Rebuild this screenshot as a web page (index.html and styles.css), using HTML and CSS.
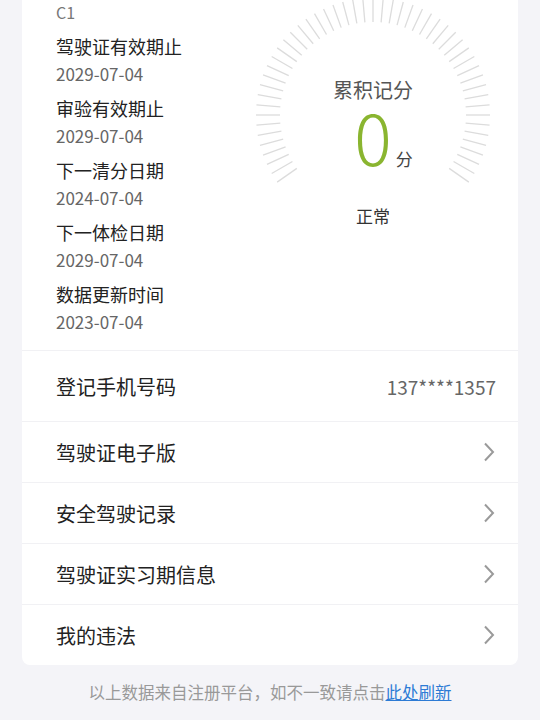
FILE: index.html
```html
<!DOCTYPE html>
<html lang="zh-CN">
<head>
  <meta charset="UTF-8">
  <title>驾驶证信息</title>
  <link rel="stylesheet" href="styles.css">
</head>
<body>
  <div class="card">
    <div class="top">
      <div class="info">
        <div class="kind">C1</div>
        <div class="pair"><div class="label">驾驶证有效期止</div><div class="date">2029-07-04</div></div>
        <div class="pair"><div class="label">审验有效期止</div><div class="date">2029-07-04</div></div>
        <div class="pair"><div class="label">下一清分日期</div><div class="date">2024-07-04</div></div>
        <div class="pair"><div class="label">下一体检日期</div><div class="date">2029-07-04</div></div>
        <div class="pair"><div class="label">数据更新时间</div><div class="date">2023-07-04</div></div>
      </div>
      <div class="gauge">
        <svg width="240" height="240" viewBox="0 0 240 240">
          <defs><line id="t" x1="120" y1="3" x2="120" y2="27"/></defs>
          <g stroke="#dcdcdc" stroke-width="1.3">
            <use href="#t" transform="rotate(-125 120 120)"/>
            <use href="#t" transform="rotate(-120 120 120)"/>
            <use href="#t" transform="rotate(-115 120 120)"/>
            <use href="#t" transform="rotate(-110 120 120)"/>
            <use href="#t" transform="rotate(-105 120 120)"/>
            <use href="#t" transform="rotate(-100 120 120)"/>
            <use href="#t" transform="rotate(-95 120 120)"/>
            <use href="#t" transform="rotate(-90 120 120)"/>
            <use href="#t" transform="rotate(-85 120 120)"/>
            <use href="#t" transform="rotate(-80 120 120)"/>
            <use href="#t" transform="rotate(-75 120 120)"/>
            <use href="#t" transform="rotate(-70 120 120)"/>
            <use href="#t" transform="rotate(-65 120 120)"/>
            <use href="#t" transform="rotate(-60 120 120)"/>
            <use href="#t" transform="rotate(-55 120 120)"/>
            <use href="#t" transform="rotate(-50 120 120)"/>
            <use href="#t" transform="rotate(-45 120 120)"/>
            <use href="#t" transform="rotate(-40 120 120)"/>
            <use href="#t" transform="rotate(-35 120 120)"/>
            <use href="#t" transform="rotate(-30 120 120)"/>
            <use href="#t" transform="rotate(-25 120 120)"/>
            <use href="#t" transform="rotate(-20 120 120)"/>
            <use href="#t" transform="rotate(-15 120 120)"/>
            <use href="#t" transform="rotate(-10 120 120)"/>
            <use href="#t" transform="rotate(-5 120 120)"/>
            <use href="#t"/>
            <use href="#t" transform="rotate(5 120 120)"/>
            <use href="#t" transform="rotate(10 120 120)"/>
            <use href="#t" transform="rotate(15 120 120)"/>
            <use href="#t" transform="rotate(20 120 120)"/>
            <use href="#t" transform="rotate(25 120 120)"/>
            <use href="#t" transform="rotate(30 120 120)"/>
            <use href="#t" transform="rotate(35 120 120)"/>
            <use href="#t" transform="rotate(40 120 120)"/>
            <use href="#t" transform="rotate(45 120 120)"/>
            <use href="#t" transform="rotate(50 120 120)"/>
            <use href="#t" transform="rotate(55 120 120)"/>
            <use href="#t" transform="rotate(60 120 120)"/>
            <use href="#t" transform="rotate(65 120 120)"/>
            <use href="#t" transform="rotate(70 120 120)"/>
            <use href="#t" transform="rotate(75 120 120)"/>
            <use href="#t" transform="rotate(80 120 120)"/>
            <use href="#t" transform="rotate(85 120 120)"/>
            <use href="#t" transform="rotate(90 120 120)"/>
            <use href="#t" transform="rotate(95 120 120)"/>
            <use href="#t" transform="rotate(100 120 120)"/>
            <use href="#t" transform="rotate(105 120 120)"/>
            <use href="#t" transform="rotate(110 120 120)"/>
            <use href="#t" transform="rotate(115 120 120)"/>
            <use href="#t" transform="rotate(120 120 120)"/>
            <use href="#t" transform="rotate(125 120 120)"/>
          </g>
        </svg>
        <div class="score">
          <div class="score-title">累积记分</div>
          <div class="score-num"><span class="num">0</span><span class="unit">分</span></div>
          <div class="score-state">正常</div>
        </div>
      </div>
    </div>

    <div class="row first"><span class="row-name">登记手机号码</span><span class="phone">137****1357</span></div>
    <div class="row"><span class="row-name">驾驶证电子版</span><svg class="arrow" width="12" height="20" viewBox="0 0 12 20"><path d="M2 1.5l8 8.5-8 8.5"/></svg></div>
    <div class="row"><span class="row-name">安全驾驶记录</span><svg class="arrow" width="12" height="20" viewBox="0 0 12 20"><path d="M2 1.5l8 8.5-8 8.5"/></svg></div>
    <div class="row"><span class="row-name">驾驶证实习期信息</span><svg class="arrow" width="12" height="20" viewBox="0 0 12 20"><path d="M2 1.5l8 8.5-8 8.5"/></svg></div>
    <div class="row"><span class="row-name">我的违法</span><svg class="arrow" width="12" height="20" viewBox="0 0 12 20"><path d="M2 1.5l8 8.5-8 8.5"/></svg></div>
  </div>

  <p class="note">以上数据来自注册平台，如不一致请点击<a href="#">此处刷新</a></p>
</body>
</html>
```

FILE: styles.css
```css
body {
  margin: 0;
  background: #f4f4f8;
  font-family: "Noto Sans CJK SC", "Noto Sans", sans-serif;
  color: #222;
}
.card {
  margin: 0 22px;
  background: #fff;
  border-radius: 0 0 8px 8px;
}
.top {
  display: flex;
  justify-content: space-between;
  padding: 0 25px 14px 34px;
}
.kind { font-size: 16px; line-height: 24px; color: #777; margin-bottom: 8px; }
.pair { margin-bottom: 6px; }
.pair:last-child { margin-bottom: 0; }
.label { font-size: 18px; line-height: 28px; color: #222; }
.date { font-size: 17px; line-height: 28px; color: #666; }

.gauge { position: relative; width: 240px; height: 240px; margin-top: -5px; }
.gauge svg { display: block; }
.score {
  position: absolute;
  inset: 0;
  display: flex;
  flex-direction: column;
  align-items: center;
  padding-top: 82px;
}
.score-title { font-size: 20px; line-height: 26px; color: #555; }
.score-num { display: flex; align-items: baseline; margin-top: 3px; }
.num { font-size: 70px; line-height: 60px; font-weight: 300; color: #8ab530; }
.unit { font-size: 17px; line-height: 20px; color: #444; margin-left: 4px; margin-right: -21px; }
.score-state { font-size: 17px; line-height: 24px; color: #333; margin-top: 35px; }

.row {
  display: flex;
  justify-content: space-between;
  align-items: center;
  box-sizing: border-box;
  height: 61px;
  padding: 0 23px 0 34px;
  border-top: 1px solid #f1f1f4;
  font-size: 20px;
}
.row.first { height: 71px; }
.phone { font-size: 19px; color: #666; margin-right: -1px; }
.arrow { fill: none; stroke: #9a9a9a; stroke-width: 2; }

.note {
  margin: 15px 0 0;
  line-height: 24px;
  text-align: center;
  font-size: 16.5px;
  color: #999;
}
.note a { color: #2d7bd5; }
```
